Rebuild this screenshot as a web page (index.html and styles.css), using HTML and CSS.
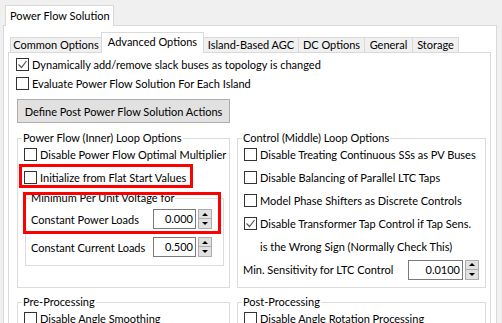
FILE: index.html
```html
<!DOCTYPE html>
<html lang="en">
<head>
    <meta charset="UTF-8">
    <title>Power Flow Solution</title>
    <link rel="stylesheet" href="styles.css">
</head>
<body>
    <div class="outer-tabs">
        <div class="outer-tab">Power Flow Solution</div>
    </div>
    <div class="outer-panel">
        <div class="tabs">
            <div class="tab" style="width: 92px">Common Options</div>
            <div class="tab active" style="width: 103px">Advanced Options</div>
            <div class="tab" style="width: 96px">Island-Based AGC</div>
            <div class="tab" style="width: 67px">DC Options</div>
            <div class="tab" style="width: 49px">General</div>
            <div class="tab" style="width: 47px">Storage</div>
        </div>

        <div class="panel">
            <div class="row top-row"><span class="box checked"></span>Dynamically add/remove slack buses as topology is changed</div>
            <div class="row top-row"><span class="box"></span>Evaluate Power Flow Solution For Each Island</div>

            <button class="button" type="button">Define Post Power Flow Solution Actions</button>

            <div class="columns">
                <div class="group marked">
                    <div class="group-title">Power Flow (Inner) Loop Options</div>
                    <div class="rows">
                        <div class="row"><span class="box"></span>Disable Power Flow Optimal Multiplier</div>
                        <div class="row"><span class="box"></span>Initialize from Flat Start Values</div>
                    </div>
                    <div class="group sub">
                        <div class="group-title">Minimum Per Unit Voltage for</div>
                        <div class="field">
                            <span class="field-label">Constant Power Loads</span>
                            <span class="input">0.000</span>
                            <span class="spin"><span class="up"></span><span class="down"></span></span>
                        </div>
                        <div class="field">
                            <span class="field-label">Constant Current Loads</span>
                            <span class="input">0.500</span>
                            <span class="spin"><span class="up"></span><span class="down"></span></span>
                        </div>
                    </div>
                    <!-- red highlight boxes drawn over the options -->
                    <div class="highlight flat-start"></div>
                    <div class="highlight min-voltage"></div>
                </div>

                <div class="group">
                    <div class="group-title">Control (Middle) Loop Options</div>
                    <div class="rows">
                        <div class="row"><span class="box"></span>Disable Treating Continuous SSs as PV Buses</div>
                        <div class="row"><span class="box"></span>Disable Balancing of Parallel LTC Taps</div>
                        <div class="row"><span class="box"></span>Model Phase Shifters as Discrete Controls</div>
                        <div class="row"><span class="box checked"></span>Disable Transformer Tap Control if Tap Sens.</div>
                        <div class="row indent">is the Wrong Sign (Normally Check This)</div>
                        <div class="field wide">
                            <span class="field-label">Min. Sensitivity for LTC Control</span>
                            <span class="input">0.0100</span>
                            <span class="spin"><span class="up"></span><span class="down"></span></span>
                        </div>
                    </div>
                </div>
            </div>

            <div class="columns lower">
                <div class="group">
                    <div class="group-title">Pre-Processing</div>
                    <div class="rows">
                        <div class="row"><span class="box"></span>Disable Angle Smoothing</div>
                    </div>
                </div>
                <div class="group">
                    <div class="group-title">Post-Processing</div>
                    <div class="rows">
                        <div class="row"><span class="box"></span>Disable Angle Rotation Processing</div>
                    </div>
                </div>
            </div>
        </div>
    </div>
</body>
</html>
```

FILE: styles.css
```css
body {
    margin: 0;
    padding-top: 5px;
    background: #f0f0f0;
    font-family: 'Lato', 'Liberation Sans', sans-serif;
    font-size: 11px;
    color: #000;
    overflow: hidden;
    height: 323px;
}
.outer-tabs {
    display: flex;
    padding-left: 5px;
}
.outer-tab {
    width: 103px;
    height: 20px;
    line-height: 20px;
    padding-left: 4px;
    background: #fff;
    border: 1px solid #d9d9d9;
    border-bottom: none;
    margin-bottom: -1px;
    position: relative;
    white-space: nowrap;
}
.outer-panel {
    margin: 0 5px 0 3px;
    padding: 6px 5px 0 4px;
    background: #fff;
    border: 1px solid #d9d9d9;
    height: 320px;
}
.tabs {
    display: flex;
    align-items: flex-end;
    padding-left: 2px;
}
.tab {
    box-sizing: border-box;
    height: 15px;
    line-height: 14px;
    text-align: center;
    background: #f0f0f0;
    border: 1px solid #d9d9d9;
    border-bottom: none;
    margin-right: -1px;
    white-space: nowrap;
}
.tab.active {
    height: 21px;
    line-height: 18px;
    background: #fff;
    margin-bottom: -1px;
    position: relative;
}
.panel {
    border: 1px solid #d9d9d9;
    padding: 2px 5px 0 7px;
    height: 300px;
}
.row {
    display: flex;
    align-items: center;
    height: 23px;
    white-space: nowrap;
}
.top-row {
    height: 19px;
}
.box {
    box-sizing: border-box;
    width: 13px;
    height: 13px;
    border: 1px solid #333;
    background: #fff;
    margin-right: 3px;
    flex: none;
}
.box.checked {
    background: #fff url("data:image/svg+xml,%3Csvg xmlns='http://www.w3.org/2000/svg' width='11' height='11'%3E%3Cpath d='M1.5 5.5l3 3 5-6.5' fill='none' stroke='%23555' stroke-width='1.2'/%3E%3C/svg%3E") no-repeat center;
}
.button {
    display: block;
    width: 213px;
    height: 24px;
    margin: 6px 0 0 1px;
    padding: 0;
    background: #e1e1e1;
    border: 1px solid #adadad;
    font: inherit;
    color: #000;
    white-space: nowrap;
}
.columns {
    display: grid;
    grid-template-columns: 213px 249px;
    column-gap: 7px;
    margin: 15px 0 0 1px;
}
.columns.lower {
    margin-top: 14px;
}
.group {
    border: 1px solid #dcdcdc;
    padding: 0 5px 6px 5px;
    position: relative;
}
.group-title {
    width: fit-content;
    margin: -8px 0 0 -1px;
    padding: 0 1px;
    line-height: 14px;
    background: #fff;
    white-space: nowrap;
}
.rows {
    margin-top: -2px;
}
.rows .box {
    margin-left: 1px;
}
.indent {
    padding-left: 17px;
}
.group.sub {
    margin: 9px 0 0 2px;
    padding: 0 0 7px 5px;
}
.field {
    display: flex;
    align-items: center;
    height: 22px;
    margin-top: 3px;
}
.field + .field {
    margin-top: 6px;
}
.field-label {
    width: 122px;
    white-space: nowrap;
}
.input {
    box-sizing: border-box;
    width: 43px;
    height: 20px;
    line-height: 18px;
    border: 1px solid #7a7a7a;
    background: #fff;
    text-align: right;
    padding-right: 2px;
}
.spin {
    display: flex;
    flex-direction: column;
    margin-left: 2px;
    height: 20px;
}
.spin span {
    box-sizing: border-box;
    width: 14px;
    height: 10px;
    background: #e1e1e1;
    border: 1px solid #adadad;
    display: flex;
    align-items: center;
    justify-content: center;
}
.spin .down {
    border-top: none;
}
.spin .up::after {
    content: "";
    border: 3px solid transparent;
    border-bottom: 3px solid #000;
    border-top: none;
}
.spin .down::after {
    content: "";
    border: 3px solid transparent;
    border-top: 3px solid #000;
    border-bottom: none;
}
.field.wide {
    height: 23px;
    margin-top: 0;
}
.field.wide .field-label {
    width: 165px;
}
.field.wide .input {
    width: 55px;
}
.highlight {
    position: absolute;
    box-sizing: border-box;
    border: 3px solid #f00;
}
.flat-start {
    left: 1px;
    top: 25px;
    width: 174px;
    height: 24px;
}
.min-voltage {
    left: 5px;
    top: 53px;
    width: 198px;
    height: 42px;
}
```
